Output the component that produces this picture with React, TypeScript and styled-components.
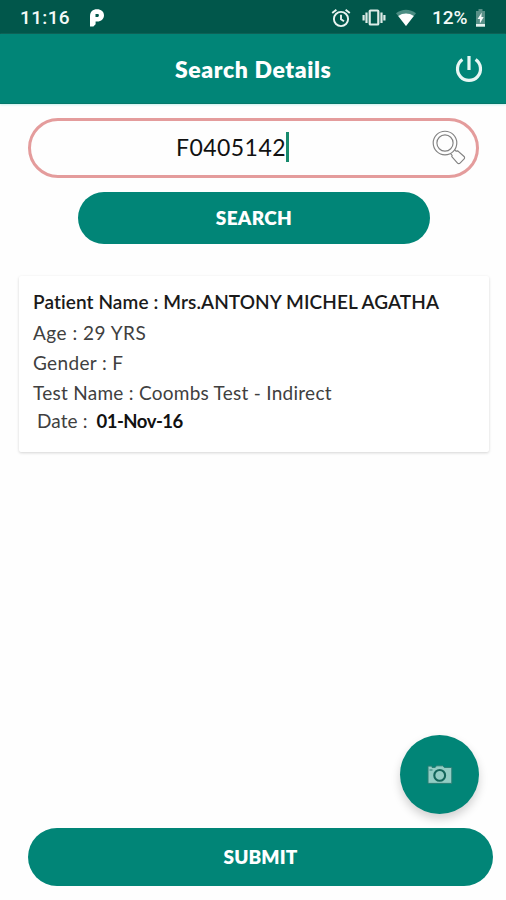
import React from "react";
import styled, { createGlobalStyle } from "styled-components";

const teal = "#018577";

const GlobalStyle = createGlobalStyle`
  * { box-sizing: border-box; }
  body { margin: 0; background: #fefefe; font-family: Lato, "Open Sans", sans-serif; }
  button { border: 0; padding: 0; font-family: inherit; color: #fff; background: ${teal}; }
  svg { display: block; flex: none; }
`;

const Screen = styled.main`
  display: flex;
  flex-direction: column;
  width: 506px;
  height: 900px;
  overflow: hidden;
`;

const StatusBar = styled.header`
  display: flex;
  align-items: center;
  height: 34px;
  padding: 2px 20px 0 20px;
  background: #01574b;
  color: #f4faf8;
  font: 500 19px/32px Roboto, sans-serif;
`;

const Clock = styled.span`
  width: 69px;
  letter-spacing: 0.35px;
`;

const StatusIcons = styled.div`
  display: flex;
  align-items: center;
  margin-left: auto;
`;

const Gap = styled.span<{ $width: number }>`
  width: ${(p) => p.$width}px;
`;

const Battery = styled.span`
  width: 38px;
  margin: 0 5px 0 15px;
  letter-spacing: -0.1px;
`;

const AppBar = styled.div`
  display: flex;
  align-items: center;
  justify-content: space-between;
  height: 70px;
  padding: 0 22px 0 175px;
  background: ${teal};
  border-bottom: 1px solid #05786b;
  box-shadow: 0 1px 2px #c9f0ec;
`;

const Title = styled.h1`
  margin: 0;
  color: #fff;
  font-size: 23px;
  font-weight: 800;
  line-height: 30px;
  letter-spacing: 0.6px;
  white-space: nowrap;
`;

const SearchField = styled.div`
  display: flex;
  align-items: center;
  width: 451px;
  height: 60px;
  margin: 14px 0 0 28px;
  padding: 0 9px 3px 145px;
  border: 3px solid #e49c9c;
  border-radius: 30px;
`;

const SearchValue = styled.span`
  width: 110px;
  color: #111;
  font-size: 23px;
  line-height: 30px;
  letter-spacing: 0.45px;
  white-space: nowrap;
`;

const Caret = styled.span`
  width: 3px;
  height: 30px;
  margin-right: auto;
  background: #178a6d;
`;

const PillButton = styled.button<{ $width: number; $height: number; $spacing: number }>`
  width: ${(p) => p.$width}px;
  height: ${(p) => p.$height}px;
  padding-bottom: 2px;
  border-radius: 30px;
  font-size: 19px;
  font-weight: 800;
  letter-spacing: ${(p) => p.$spacing}px;
`;

const SearchButton = styled(PillButton)`
  margin: 14px 0 0 78px;
`;

const Card = styled.section`
  width: 470px;
  height: 176px;
  margin: 32px 0 0 19px;
  padding: 10px 14px;
  background: #fff;
  border-radius: 2px;
  box-shadow: 0 1px 3px rgba(0, 0, 0, 0.17);
`;

const Line = styled.p<{ $spacing: number; $weight?: number; $height?: number; $indent?: number }>`
  margin: 0;
  padding-left: ${(p) => p.$indent ?? 0}px;
  color: ${(p) => (p.$weight ? "#1a1a1a" : "#404040")};
  font-size: 19px;
  font-weight: ${(p) => p.$weight ?? 400};
  line-height: ${(p) => p.$height ?? 30}px;
  letter-spacing: ${(p) => p.$spacing}px;
  white-space: nowrap;
`;

const DateValue = styled.strong`
  margin-left: 4px;
  color: #111;
  font-size: 18.5px;
  font-weight: 700;
  letter-spacing: -0.5px;
`;

const Footer = styled.footer`
  display: flex;
  flex-direction: column;
  gap: 14px;
  width: 465px;
  margin: auto 0 14px 28px;
`;

const CameraButton = styled.button`
  display: flex;
  align-items: center;
  justify-content: center;
  align-self: flex-end;
  width: 79px;
  height: 79px;
  margin-right: 14px;
  border-radius: 50%;
  box-shadow: 0 5px 10px rgba(0, 0, 0, 0.18);
`;

const AppMark = () => (
  <svg width="16" height="20" viewBox="0 0 16 20">
    <path
      d="M1 18.4V8.2C1 3.8 3.8 1.2 8 1.2s7 2.4 7 6.1-2.7 6.3-6.7 6.3H6.6v2.6l-2.2 2.2z"
      fill="#fff"
    />
    <path d="M6.5 6.1h1.9c1 0 1.5.5 1.5 1.3s-.6 1.6-1.6 1.6H6.5z" fill="#01574b" />
  </svg>
);

const AlarmIcon = () => (
  <svg width="20" height="20" viewBox="0 0 20 20" fill="none" stroke="#e9f4f1" strokeWidth="1.9">
    <circle cx="10" cy="11" r="7.1" />
    <path d="M10 6.7v4.6l3 2M1.2 5.1l4.2-3.4M18.8 5.1l-4.2-3.4" />
  </svg>
);

const VibrateIcon = () => (
  <svg width="24" height="20" viewBox="0 0 24 20" fill="none" stroke="#dcebe7" strokeWidth="2.2">
    <rect x="7.7" y="2.5" width="8.6" height="14" rx="0.8" strokeWidth="2.2" />
    <path d="M4.5 4.5v10.5M19.5 4.5v10.5M1.6 7v5.5M22.4 7v5.5" />
  </svg>
);

const WifiIcon = () => (
  <svg width="22" height="20" viewBox="0 0 22 20">
    <path d="M1 5.3C6.8.6 15.2.6 21 5.3L11 18z" fill="#4b8d83" />
    <path d="M3.2 8C8 4.7 14 4.7 18.8 8L11 18z" fill="#fff" />
  </svg>
);

const BatteryIcon = () => (
  <svg width="11" height="20" viewBox="0 0 11 20">
    <path d="M3.5 1h4v2H10v15H1V3h2.5z" fill="#589087" />
    <path d="M1 16h9v2.7H1z" fill="#e7f3f0" />
    <path d="M6.7 4.5L2.6 11h2.3v4.5L8.7 9H6.4z" fill="#f5fbfa" />
  </svg>
);

const PowerIcon = () => (
  <svg width="30" height="30" viewBox="0 0 30 30" fill="none" stroke="#e8f7f4" strokeWidth="3.2">
    <path d="M15 2v14M8.4 5.5a11.5 11.5 0 1 0 13.2 0" />
  </svg>
);

const MagnifierIcon = () => (
  <svg width="36" height="36" viewBox="0 0 36 36" fill="none" stroke="#828282" strokeWidth="1.15">
    <circle cx="14" cy="14" r="11.8" />
    <circle cx="14" cy="14" r="8.1" />
    <path d="M19.6 24.6l1.5 1.7-.3 1.4 5.5 6.2c1 1.1 2 1 3 0l3.6-3.7c1-1.1.9-2-.1-2.9l-6.1-5.4-1.7.2-1.5-1.5" />
  </svg>
);

const CameraIcon = () => (
  <svg width="26" height="22" viewBox="0 0 26 22">
    <path d="M1 3.4V2.1h4v1.3h3L9.7 1.8h6l1.6 1.6h7.5v16H1z" fill="#93cdc4" stroke="#287d73" strokeWidth="1" />
    <circle cx="12.7" cy="11.4" r="5.4" fill="#93cdc4" stroke="#14665b" strokeWidth="2.1" />
    <path d="M2.5 6h3" stroke="#287d73" />
  </svg>
);

export default function App() {
  return (
    <>
      <GlobalStyle />
      <Screen>
        <StatusBar>
          <Clock>11:16</Clock>
          <AppMark />
          <StatusIcons>
            <AlarmIcon />
            <Gap $width={11} />
            <VibrateIcon />
            <Gap $width={9} />
            <WifiIcon />
            <Battery>12%</Battery>
            <BatteryIcon />
          </StatusIcons>
        </StatusBar>
        <AppBar>
          <Title>Search Details</Title>
          <PowerIcon />
        </AppBar>
        <SearchField>
          <SearchValue>F0405142</SearchValue>
          <Caret />
          <MagnifierIcon />
        </SearchField>
        <SearchButton $width={352} $height={52} $spacing={0.35}>SEARCH</SearchButton>
        <Card>
          <Line $spacing={0.1} $weight={600} $height={32}>Patient Name : Mrs.ANTONY MICHEL AGATHA</Line>
          <Line $spacing={0.5}>Age : 29 YRS</Line>
          <Line $spacing={0.35}>Gender : F</Line>
          <Line $spacing={0.27}>Test Name : Coombs Test - Indirect</Line>
          <Line $spacing={0.1} $height={26} $indent={4}>
            Date : <DateValue>01-Nov-16</DateValue>
          </Line>
        </Card>
        <Footer>
          <CameraButton aria-label="Take photo">
            <CameraIcon />
          </CameraButton>
          <PillButton $width={465} $height={58} $spacing={0.1}>SUBMIT</PillButton>
        </Footer>
      </Screen>
    </>
  );
}
